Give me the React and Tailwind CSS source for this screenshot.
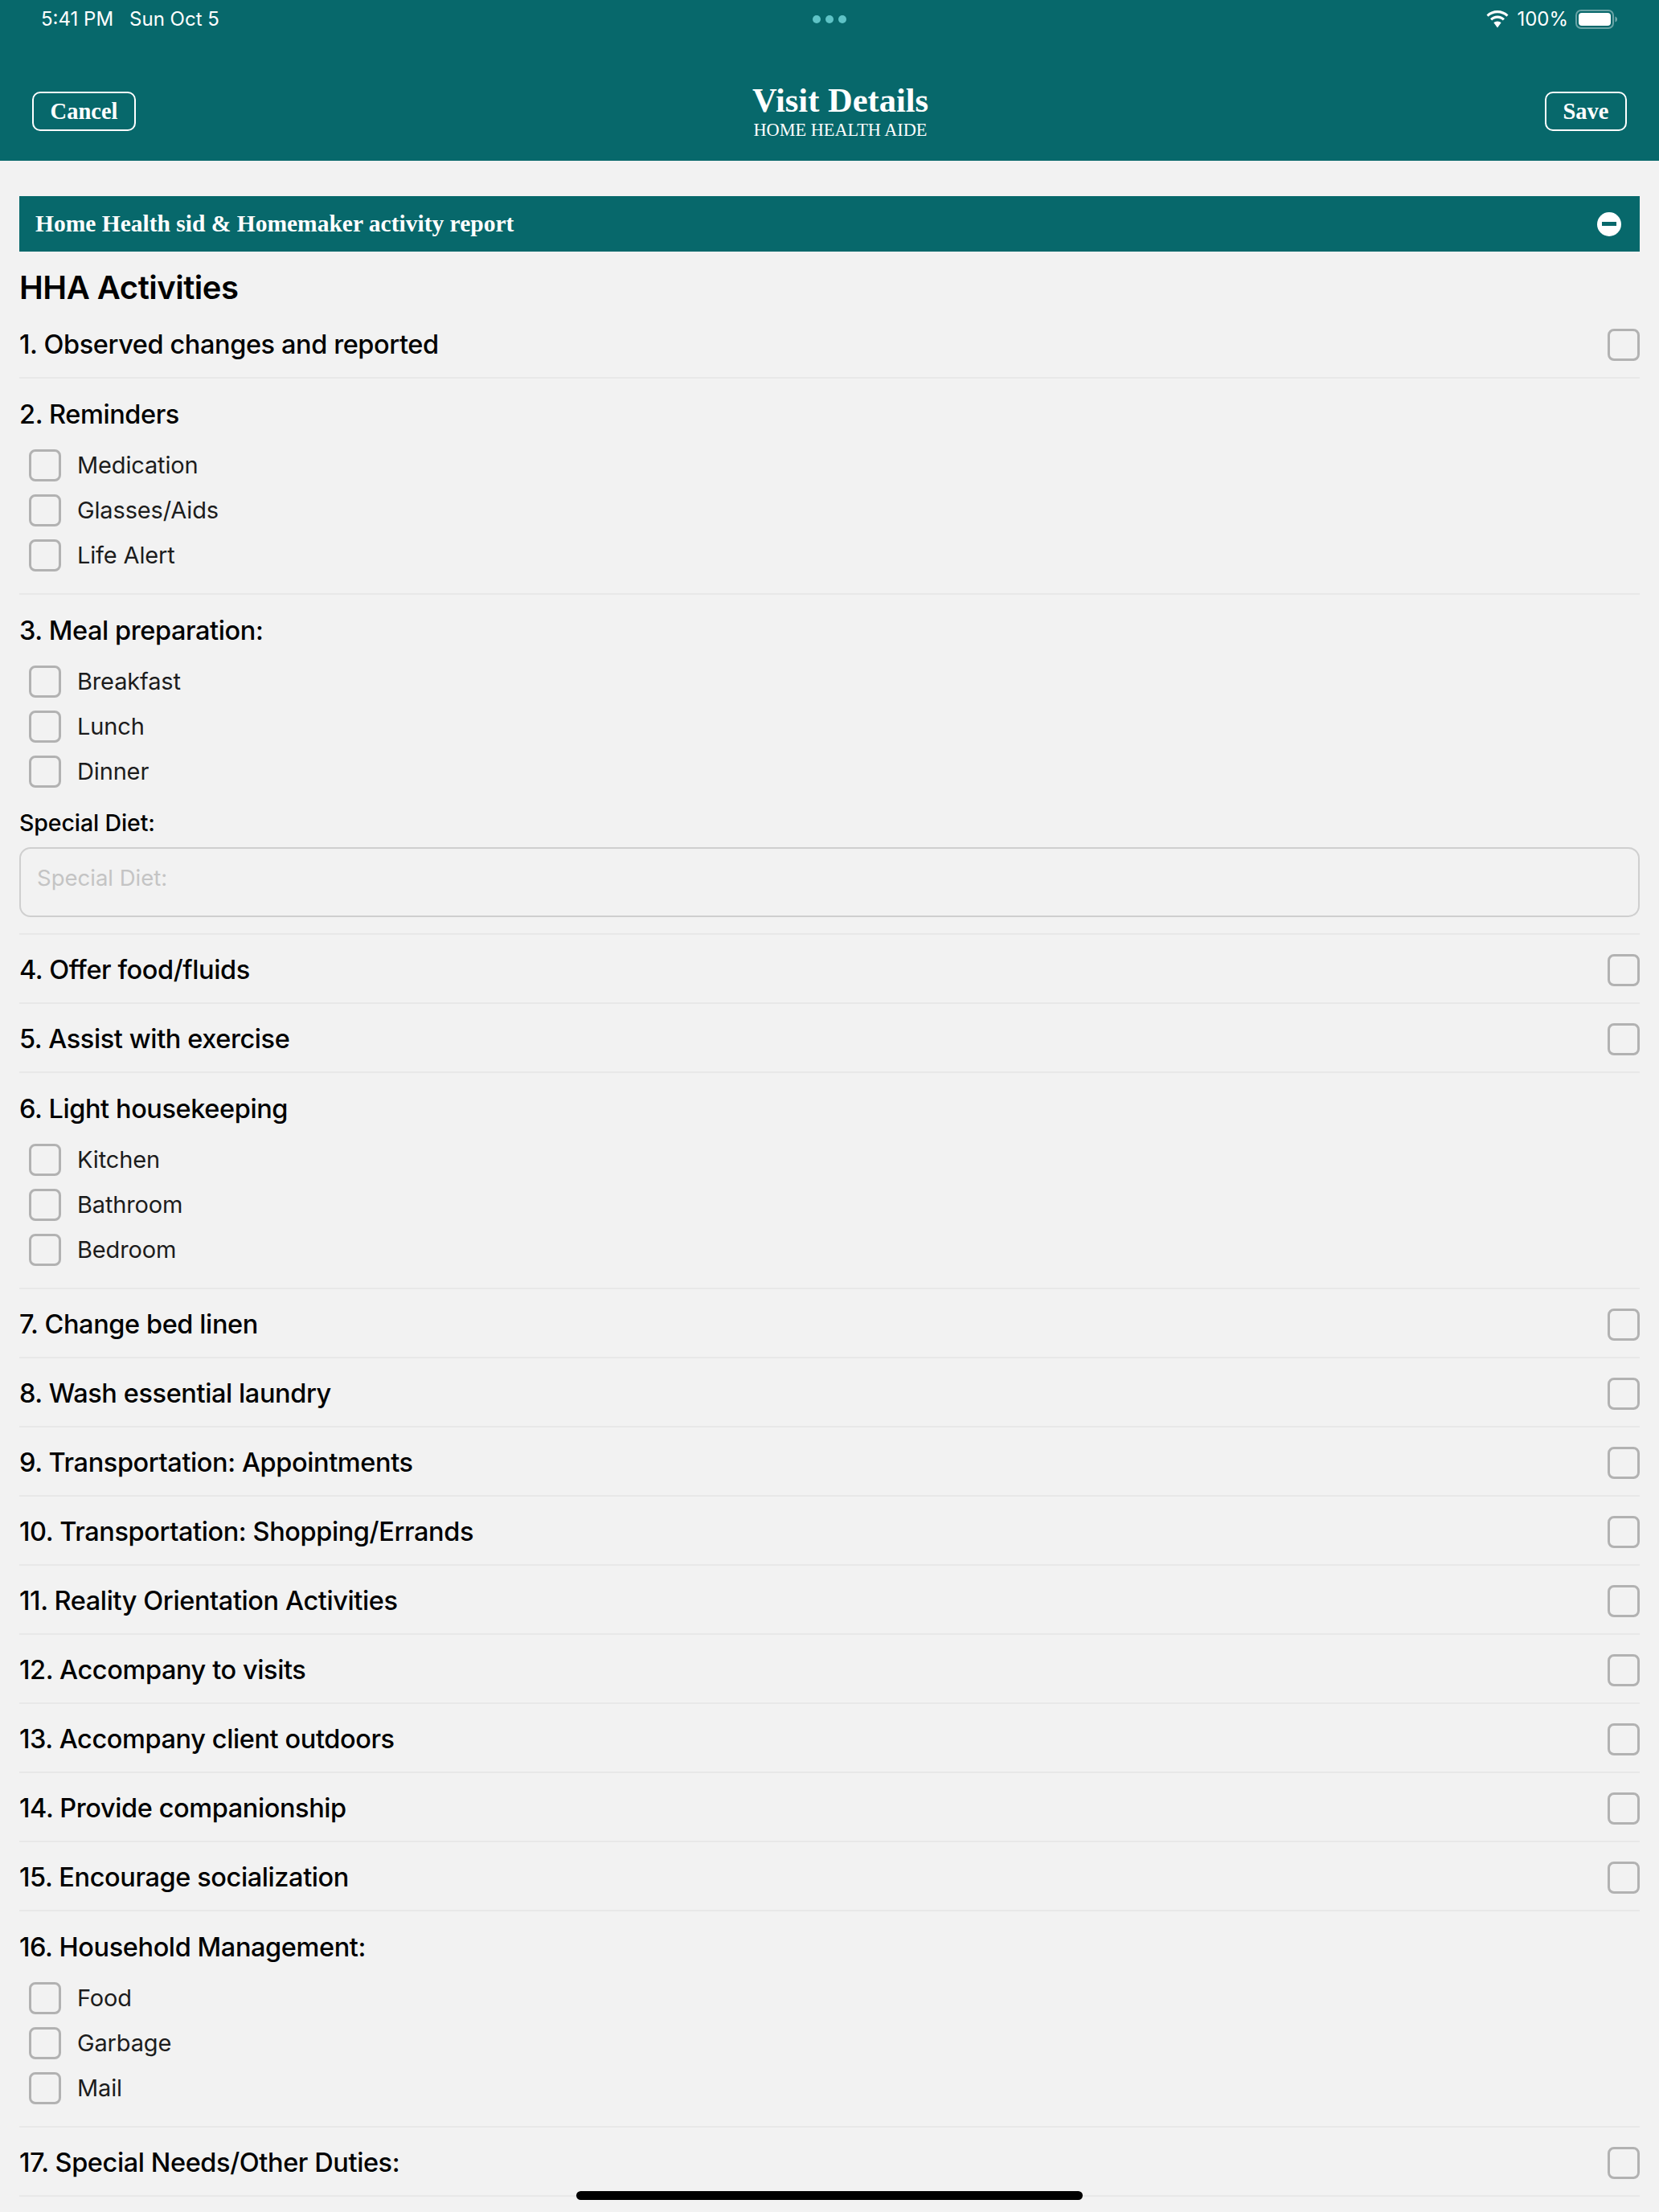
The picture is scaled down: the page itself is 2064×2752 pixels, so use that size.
import React from "react";

const Box = () => (
  <span className="block w-[40px] h-[40px] shrink-0 rounded-[8px] border-[3px] border-[#b2b2b2]" />
);

const SingleRow = ({ title }) => (
  <div className="h-[86px] pt-[3px] flex items-center justify-between border-b-2 border-[#e8e8e8]">
    <span className="text-[32.5px] leading-[40px] font-medium text-black tracking-[-0.4px]">{title}</span>
    <Box />
  </div>
);

const Option = ({ label }) => (
  <div className="h-[56px] flex items-center gap-[20px] pl-[12px]">
    <Box />
    <span className="text-[29px] leading-[40px] text-[#1c1c1c] tracking-[-0.15px]">{label}</span>
  </div>
);

const GroupRow = ({ title, options, children }) => (
  <div className="pt-[25px] pb-[19px] border-b-2 border-[#e8e8e8]">
    <div className="text-[32.5px] leading-[40px] font-medium text-black tracking-[-0.4px] mb-[15px]">{title}</div>
    <div className="flex flex-col">
      {options.map((o) => (
        <Option key={o} label={o} />
      ))}
    </div>
    {children}
  </div>
);

const Wifi = () => (
  <svg width="30" height="22" viewBox="0 0 30 22" fill="white">
    <path d="M15 3.2c4.4 0 8.4 1.7 11.4 4.5l2.1-2.3C24.9 2 20.2 0 15 0S5.100 2 1.500 5.400l2.100 2.300C6.600 4.900 10.600 3.200 15 3.200z" />
    <path d="M15 9.800c2.600 0 5 1 6.800 2.700l2.200-2.300C21.600 7.900 18.500 6.500 15 6.500s-6.600 1.400-9 3.700l2.200 2.300c1.800-1.700 4.200-2.700 6.800-2.700z" />
    <path d="M15 13.500c-1.800 0-3.400.7-4.600 1.800L15 21.500l4.600-6.200c-1.200-1.100-2.800-1.800-4.600-1.800z" />
  </svg>
);

const Battery = () => (
  <svg width="52" height="24" viewBox="0 0 52 24" fill="none">
    <rect x="1" y="1" width="46" height="22" rx="6" stroke="white" strokeOpacity="0.4" strokeWidth="2" />
    <rect x="4" y="4" width="40" height="16" rx="4" fill="white" />
    <path d="M49.500 8.500c1.500.5 2.500 2 2.500 3.500s-1 3-2.500 3.500z" fill="white" fillOpacity="0.45" />
  </svg>
);

const serif = "font-['Liberation_Serif',serif]";

export default function App() {
  return (
    <div className="relative h-[2752px] w-[2064px] overflow-hidden bg-[#f2f2f2] font-['Inter',sans-serif]">
      <header className="h-[200px] bg-[#07686b] text-white flex flex-col">
        <div className="h-[48px] pl-[51px] pr-[52px] flex items-center justify-between text-[24px] leading-[30px]">
          <div className="flex gap-[20px] w-[600px]">
            <span>5:41 PM</span>
            <span>Sun Oct 5</span>
          </div>
          <div className="flex gap-[6px]">
            <span className="w-[10px] h-[10px] rounded-full bg-[#5fc3c6]" />
            <span className="w-[10px] h-[10px] rounded-full bg-[#5fc3c6]" />
            <span className="w-[10px] h-[10px] rounded-full bg-[#5fc3c6]" />
          </div>
          <div className="flex items-center justify-end gap-[9px] w-[600px]">
            <Wifi />
            <span>100%</span>
            <Battery />
          </div>
        </div>
        <div className="relative flex justify-between items-start px-[40px]">
          <button className={`mt-[66px] h-[49px] w-[129px] pt-[2px] rounded-[10px] border-2 border-white text-[28.5px] font-bold ${serif}`}>Cancel</button>
          <div className={`flex flex-col items-center ${serif}`}>
            <span className="text-[42.5px] leading-[44px] font-bold mt-[55px]">Visit Details</span>
            <span className="text-[22.300px] leading-[26px] mt-[2px]">HOME HEALTH AIDE</span>
          </div>
          <button className={`mt-[66px] h-[49px] w-[102px] pt-[2px] rounded-[10px] border-2 border-white text-[28.5px] font-bold ${serif}`}>Save</button>
        </div>
      </header>

      <main className="px-[24px] pt-[44px]">
        <div className={`h-[69px] bg-[#07686b] text-white flex items-center justify-between pl-[20px] pr-[23px] ${serif}`}>
          <span className="text-[29.5px] font-bold">Home Health sid &amp; Homemaker activity report</span>
          <span className="w-[30px] h-[30px] rounded-full bg-white flex items-center justify-center">
            <span className="w-[18px] h-[5px] bg-[#07686b]" />
          </span>
        </div>

        <h1 className="text-[40px] leading-[48px] font-semibold text-black mt-[21px] mb-[3px] tracking-[-0.5px]">HHA Activities</h1>

        <SingleRow title="1. Observed changes and reported" />
        <GroupRow title="2. Reminders" options={["Medication", "Glasses/Aids", "Life Alert"]} />
        <GroupRow title="3. Meal preparation:" options={["Breakfast", "Lunch", "Dinner"]}>
          <label className="block text-[28.5px] leading-[34px] font-medium text-black mt-[19px] tracking-[-0.1px]">Special Diet:</label>
          <div className="mt-[13px] mb-[1px] h-[87px] rounded-[14px] border-2 border-[#cfcfcf] pl-[20px] pt-[16px] text-[27.500px] leading-[40px] text-[#c4c4c4]">Special Diet:</div>
        </GroupRow>
        <SingleRow title="4. Offer food/fluids" />
        <SingleRow title="5. Assist with exercise" />
        <GroupRow title="6. Light housekeeping" options={["Kitchen", "Bathroom", "Bedroom"]} />
        <SingleRow title="7. Change bed linen" />
        <SingleRow title="8. Wash essential laundry" />
        <SingleRow title="9. Transportation: Appointments" />
        <SingleRow title="10. Transportation: Shopping/Errands" />
        <SingleRow title="11. Reality Orientation Activities" />
        <SingleRow title="12. Accompany to visits" />
        <SingleRow title="13. Accompany client outdoors" />
        <SingleRow title="14. Provide companionship" />
        <SingleRow title="15. Encourage socialization" />
        <GroupRow title="16. Household Management:" options={["Food", "Garbage", "Mail"]} />
        <SingleRow title="17. Special Needs/Other Duties:" />
      </main>

      <div className="absolute left-[717px] top-[2726px] w-[630px] h-[11px] rounded-full bg-black" />
    </div>
  );
}
